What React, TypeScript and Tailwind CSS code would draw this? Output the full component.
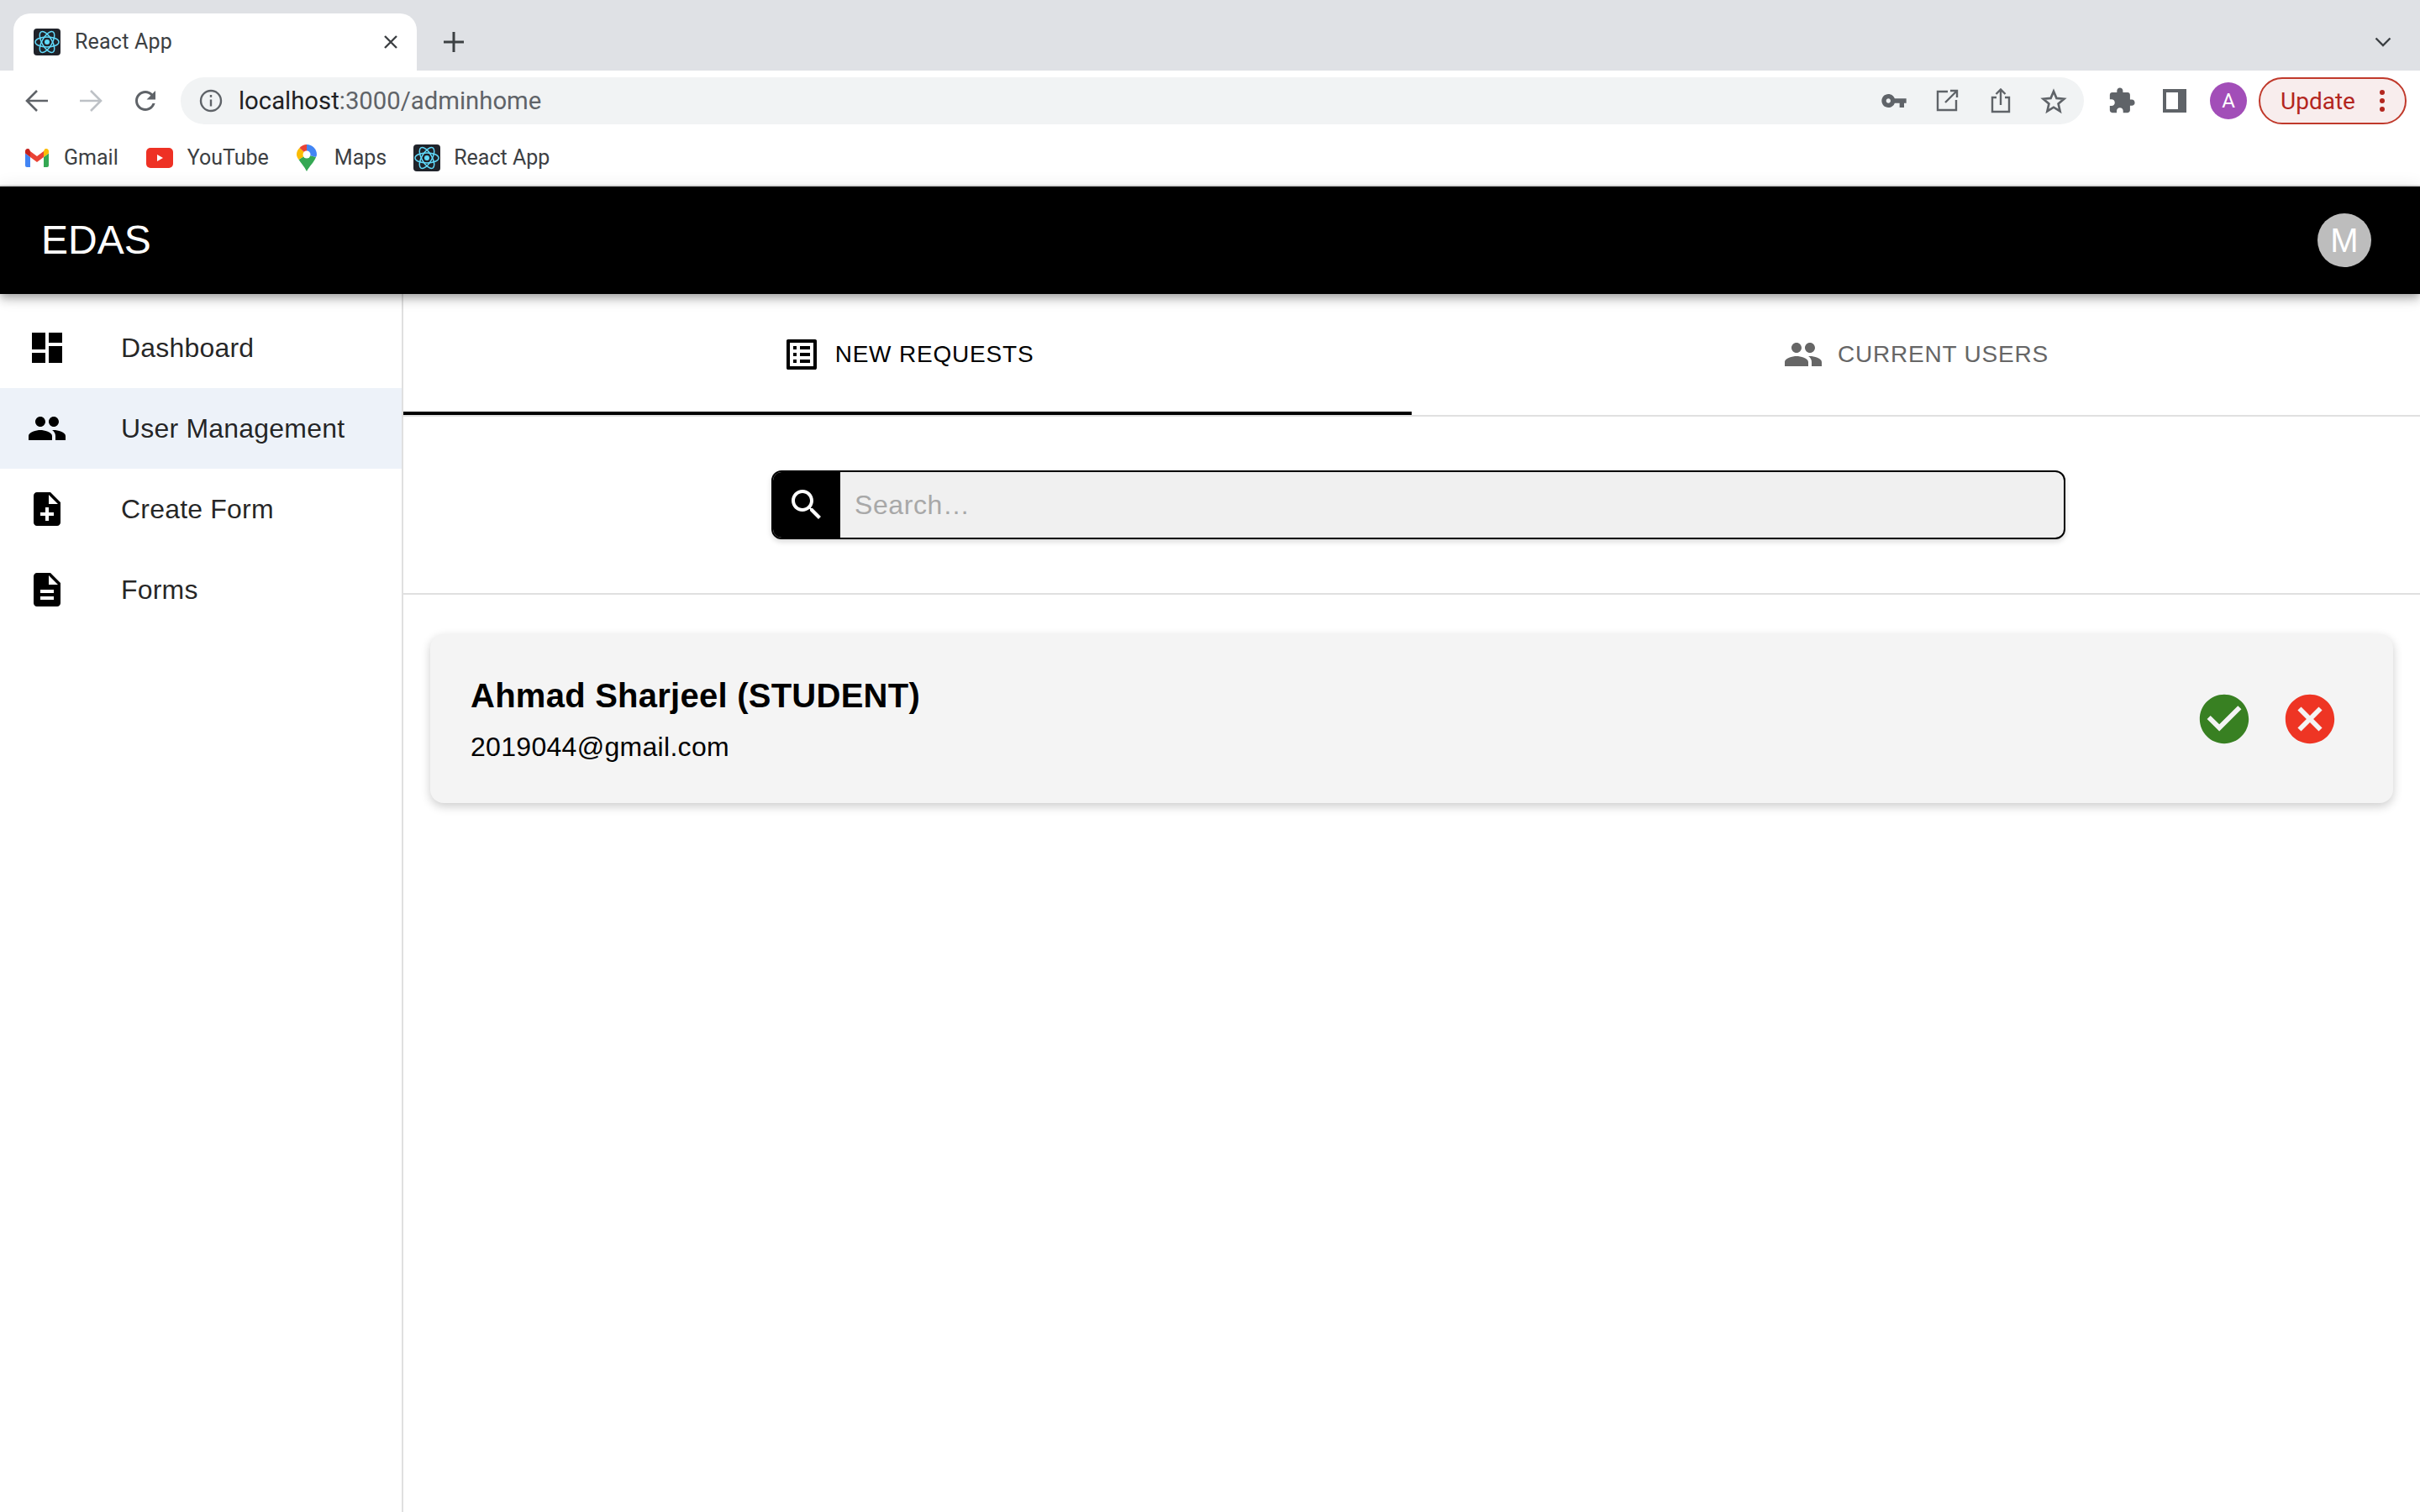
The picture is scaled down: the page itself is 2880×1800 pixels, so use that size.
import React from 'react';

const chromeFont = "font-['Roboto',sans-serif]";

const MuiIcon = ({ d, className }: { d: string; className?: string }) => (
    <svg viewBox="0 0 24 24" fill="currentColor" className={className}>
        <path d={d} />
    </svg>
);

const PATHS = {
    dashboard: 'M3 13h8V3H3v10zm0 8h8v-6H3v6zm10 0h8V11h-8v10zm0-18v6h8V3h-8z',
    people: 'M16 11c1.66 0 2.99-1.34 2.99-3S17.66 5 16 5c-1.66 0-3 1.34-3 3s1.34 3 3 3zm-8 0c1.66 0 2.99-1.34 2.99-3S9.66 5 8 5C6.34 5 5 6.34 5 8s1.34 3 3 3zm0 2c-2.33 0-7 1.17-7 3.5V19h14v-2.5c0-2.33-4.67-3.5-7-3.5zm8 0c-.29 0-.62.02-.97.05 1.16.84 1.97 1.97 1.97 3.45V19h6v-2.5c0-2.33-4.67-3.5-7-3.5z',
    noteAdd: 'M14 2H6c-1.1 0-1.99.9-1.99 2L4 20c0 1.1.89 2 1.99 2H18c1.1 0 2-.9 2-2V8l-6-6zm2 14h-3v3h-2v-3H8v-2h3v-3h2v3h3v2zm-3-7V3.5L18.5 9H13z',
    description: 'M14 2H6c-1.1 0-1.99.9-1.99 2L4 20c0 1.1.89 2 1.99 2H18c1.1 0 2-.9 2-2V8l-6-6zm2 16H8v-2h8v2zm0-4H8v-2h8v2zm-3-5V3.5L18.5 9H13z',
    listAlt: 'M19 5v14H5V5h14m1.1-2H3.9c-.5 0-.9.4-.9.9v16.2c0 .4.4.9.9.9h16.2c.4 0 .9-.5.9-.9V3.9c0-.5-.5-.9-.9-.9zM11 7h6v2h-6V7zm0 4h6v2h-6v-2zm0 4h6v2h-6zM7 7h2v2H7zm0 4h2v2H7zm0 4h2v2H7z',
    search: 'M15.5 14h-.79l-.28-.27C15.41 12.59 16 11.11 16 9.5 16 5.91 13.09 3 9.5 3S3 5.91 3 9.5 5.91 16 9.5 16c1.61 0 3.09-.59 4.23-1.57l.27.28v.79l5 4.99L20.49 19l-4.99-5zm-6 0C7.01 14 5 11.99 5 9.5S7.01 5 9.5 5 14 7.01 14 9.5 11.99 14 9.5 14z',
    check: 'M12 2C6.48 2 2 6.48 2 12s4.48 10 10 10 10-4.48 10-10S17.52 2 12 2zm-2 15l-5-5 1.41-1.41L10 14.17l7.59-7.59L19 8l-9 9z',
    cancel: 'M12 2C6.47 2 2 6.47 2 12s4.47 10 10 10 10-4.47 10-10S17.53 2 12 2zm5 13.59L15.59 17 12 13.41 8.41 17 7 15.59 10.59 12 7 8.41 8.41 7 12 10.59 15.59 7 17 8.41 13.41 12 17 15.59z',
    key: 'M12.65 10C11.83 7.67 9.61 6 7 6c-3.31 0-6 2.69-6 6s2.69 6 6 6c2.61 0 4.83-1.67 5.65-4H17v4h4v-4h2v-4H12.65zM7 14c-1.1 0-2-.9-2-2s.9-2 2-2 2 .9 2 2-.9 2-2 2z',
    puzzle: 'M20.5 11H19V7c0-1.1-.9-2-2-2h-4V3.5C13 2.12 11.88 1 10.5 1S8 2.12 8 3.5V5H4c-1.1 0-1.99.9-1.99 2v3.8H3.5c1.49 0 2.7 1.21 2.7 2.7s-1.21 2.7-2.7 2.7H2V20c0 1.1.9 2 2 2h3.8v-1.5c0-1.49 1.21-2.7 2.7-2.7 1.49 0 2.7 1.21 2.7 2.7V22H17c1.1 0 2-.9 2-2v-4h1.5c1.38 0 2.5-1.12 2.5-2.5S21.88 11 20.5 11z',
    refresh: 'M17.65 6.35C16.2 4.9 14.21 4 12 4c-4.42 0-7.99 3.58-7.99 8s3.57 8 7.99 8c3.73 0 6.84-2.55 7.73-6h-2.08c-.82 2.33-3.04 4-5.65 4-3.31 0-6-2.69-6-6s2.69-6 6-6c1.66 0 3.14.69 4.22 1.78L13 11h7V4l-2.35 2.35z',
};

const ReactFavicon = () => (
    <svg viewBox="0 0 32 48" className="w-8 h-12 shrink-0">
        <rect x="0" y="0" width="32" height="48" rx="4" fill="#20232a" />
        <g fill="none" stroke="#61dafb" strokeWidth="1.5">
            <ellipse cx="16" cy="24" rx="14" ry="6" />
            <ellipse cx="16" cy="24" rx="14" ry="6" transform="rotate(60 16 24)" />
            <ellipse cx="16" cy="24" rx="14" ry="6" transform="rotate(120 16 24)" />
        </g>
        <circle cx="16" cy="24" r="3" fill="#61dafb" />
    </svg>
);

const GmailIcon = () => (
    <svg viewBox="0 0 28 22" className="w-7 h-[22px] shrink-0">
        <path d="M2 22h4V10L0 5.5V20a2 2 0 0 0 2 2z" fill="#4285f4" />
        <path d="M22 22h4a2 2 0 0 0 2-2V5.5L22 10z" fill="#34a853" />
        <path d="M22 3v7l6-4.5V3c0-2.5-2.8-3.9-4.8-2.4z" fill="#fbbc04" />
        <path d="M6 10V3l8 6 8-6v7l-8 6z" fill="#ea4335" />
        <path d="M0 3v2.5L6 10V3L4.8.6C2.8-.9 0 .5 0 3z" fill="#c5221f" />
    </svg>
);

const YoutubeIcon = () => (
    <svg viewBox="0 0 32 24" className="w-8 h-6 shrink-0">
        <rect width="32" height="24" rx="5" fill="#ee3124" />
        <path d="M13 8l7 4-7 4z" fill="#fff" />
    </svg>
);

const MapsIcon = () => (
    <svg viewBox="0 0 24 32" className="w-6 h-8 shrink-0">
        <path d="M12 32C9 26 5 22 2.5 18L12 12z" fill="#34a853" />
        <path d="M12 32c3-6 9-11 11-17L12 12z" fill="#34a853" />
        <path d="M2.5 18C1 16 0 14 0 12c0-3 1-5.500 3.500-8L12 12z" fill="#fbbc04" />
        <path d="M3.500 4C6 1.500 9 0 12 0v12z" fill="#ea4335" />
        <path d="M12 0c6.500 0 12 5 12 12 0 1-.4 2-1 3L12 12z" fill="#4285f4" />
        <circle cx="12" cy="12" r="4.500" fill="#fff" />
    </svg>
);

const Bookmark = ({ icon, label, className }: { icon: React.ReactNode; label: string; className: string }) => (
    <div className={`flex items-center ${className}`}>
        {icon}
        <span>{label}</span>
    </div>
);

const BrowserChrome = () => (
    <div className={`${chromeFont} h-[222px] shrink-0 flex flex-col bg-white border-b-2 border-[#e3e3e3]`}>
        {/* tab strip */}
        <div className="h-[84px] bg-[#dfe1e5] flex items-end pl-[16px] pr-[34px]">
            <div className="w-[480px] h-[68px] bg-white rounded-t-[20px] flex items-center pl-[24px] pr-[22px]">
                <div className="h-8 w-8 shrink-0 flex items-center overflow-hidden rounded">
                    <ReactFavicon />
                </div>
                <span className="ml-[17px] text-[25px] text-[#3c4043] tracking-[0.2px]">React App</span>
                <svg viewBox="0 0 18 18" className="ml-auto w-[18px] h-[18px] text-[#3c4043]" stroke="currentColor" strokeWidth="2.4" fill="none">
                    <path d="M2 2l14 14M16 2L2 16" />
                </svg>
            </div>
            <svg viewBox="0 0 24 24" className="ml-[32px] mb-[22px] w-6 h-6 text-[#3c4043]" stroke="currentColor" strokeWidth="3" fill="none">
                <path d="M12 0v24M0 12h24" />
            </svg>
            <svg viewBox="0 0 20 12" className="ml-auto mb-[28px] w-5 h-3 text-[#3c4043]" stroke="currentColor" strokeWidth="2.400" fill="none">
                <path d="M1.500 1.500L10 10l8.500-8.500" />
            </svg>
        </div>
        {/* toolbar */}
        <div className="h-[72px] flex items-center pl-[30px]">
            <svg viewBox="0 0 28 28" className="w-7 h-7 text-[#5f6368]" stroke="currentColor" strokeWidth="2.600" fill="none">
                <path d="M27 14H3M14 2L2 14l12 12" />
            </svg>
            <svg viewBox="0 0 28 28" className="ml-[36px] w-7 h-7 text-[#bdc1c6]" stroke="currentColor" strokeWidth="2.600" fill="none">
                <path d="M1 14h24M14 2l12 12-12 12" />
            </svg>
            <MuiIcon d={PATHS.refresh} className="ml-[33px] w-9 h-9 text-[#5f6368]" />
            <div className="ml-[24px] w-[2265px] h-14 bg-[#f1f3f4] rounded-full flex items-center pl-[22px] pr-[20px]">
                <svg viewBox="0 0 28 28" className="w-7 h-7 text-[#5f6368]" fill="none" stroke="currentColor" strokeWidth="2.400">
                    <circle cx="14" cy="14" r="12" />
                    <path d="M14 12.500v8M14 7v2.800" />
                </svg>
                <span className="ml-[19px] pt-[2px] text-[29.3px] text-[#202124]">
                    localhost<span className="text-[#5f6368]">:3000/adminhome</span>
                </span>
                <MuiIcon d={PATHS.key} className="ml-auto w-[32px] h-[32px] text-[#5f6368]" />
                <svg viewBox="0 0 28 28" className="ml-[33px] w-7 h-7 text-[#5f6368]" fill="none" stroke="currentColor" strokeWidth="2.400">
                    <path d="M15 3H3v22h22V13M12 16L25 3M18 2h8v8" />
                </svg>
                <svg viewBox="0 0 24 30" className="ml-[38px] w-6 h-[30px] text-[#5f6368]" fill="none" stroke="currentColor" strokeWidth="2.400">
                    <path d="M7 11H2v17h20V11h-5M12 20V2M6.500 7L12 1.500 17.500 7" />
                </svg>
                <svg viewBox="0 0 24 24" className="ml-[35px] w-8 h-8 text-[#5f6368]" fill="none" stroke="currentColor" strokeWidth="2">
                    <path d="M12 3.500l2.600 6.200 6.700.6-5.100 4.400 1.500 6.600L12 17.800l-5.700 3.500 1.500-6.600-5.100-4.400 6.700-.6z" />
                </svg>
            </div>
            <MuiIcon d={PATHS.puzzle} className="ml-[28px] w-[34px] h-[34px] text-[#5f6368]" />
            <svg viewBox="0 0 28 28" className="ml-[32px] w-7 h-7 text-[#5f6368]" fill="currentColor">
                <path d="M0 0h28v28H0zM4 4v20h14V4z" fillRule="evenodd" />
            </svg>
            <div className="ml-[28px] w-11 h-11 rounded-full bg-[#a24eb8] flex items-center justify-center text-white text-[24px]">A</div>
            <div className="ml-[14px] w-[176px] h-[56px] rounded-full border-2 border-[#c0392b] bg-[#f8eded] flex items-center pl-[24px] pr-[24px] text-[#b3261e] text-[28px]">
                <span className="pt-[1px]">Update</span>
                <svg viewBox="0 0 6 26" className="ml-auto w-[6px] h-[26px]" fill="#b3261e">
                    <circle cx="3" cy="3" r="3" />
                    <circle cx="3" cy="13" r="3" />
                    <circle cx="3" cy="23" r="3" />
                </svg>
            </div>
        </div>
        {/* bookmarks */}
        <div className="flex-1 flex items-center pl-[30px] text-[25px] text-[#3c4043]">
            <Bookmark icon={<GmailIcon />} label="Gmail" className="gap-[18px]" />
            <Bookmark icon={<YoutubeIcon />} label="YouTube" className="ml-[33px] gap-[17px]" />
            <Bookmark icon={<MapsIcon />} label="Maps" className="ml-[33px] gap-[21px]" />
            <Bookmark
                icon={<div className="h-8 w-8 flex items-center overflow-hidden rounded"><ReactFavicon /></div>}
                label="React App"
                className="ml-[32px] gap-4"
            />
        </div>
    </div>
);

const NAV_ITEMS = [
    { label: 'Dashboard', icon: PATHS.dashboard },
    { label: 'User Management', icon: PATHS.people, active: true },
    { label: 'Create Form', icon: PATHS.noteAdd },
    { label: 'Forms', icon: PATHS.description },
];

export default function App() {
    return (
        <div className="w-[2880px] h-[1800px] overflow-hidden flex flex-col bg-white font-['Liberation_Sans',sans-serif]">
            <BrowserChrome />

            <header className="relative z-10 h-[128px] shrink-0 bg-black flex items-center justify-between pl-[49px] pr-[58px] shadow-[0_4px_8px_-2px_rgba(0,0,0,0.2),0_8px_10px_0_rgba(0,0,0,0.14),0_2px_20px_0_rgba(0,0,0,0.12)]">
                <span className="text-white text-[48px] leading-none">EDAS</span>
                <div className="w-16 h-16 rounded-full bg-[#bdbdbd] flex items-center justify-center text-white text-[40px]">M</div>
            </header>

            <div className="flex-1 flex min-h-0">
                <aside className="w-[480px] shrink-0 border-r-2 border-[#e0e0e0] pt-4">
                    {NAV_ITEMS.map(item => (
                        <div
                            key={item.label}
                            className={`h-24 flex items-center pl-8 ${item.active ? 'bg-[#edf2f9]' : ''}`}
                        >
                            <MuiIcon d={item.icon} className="w-12 h-12 text-black shrink-0" />
                            <span className="ml-[64px] text-[32px] tracking-[0.2px] text-black/87">{item.label}</span>
                        </div>
                    ))}
                </aside>

                <main className="flex-1 min-w-0 flex flex-col">
                    <div className="h-[146px] shrink-0 flex border-b-2 border-[#e0e0e0]">
                        <div className="flex-1 flex items-center justify-center gap-4 border-b-4 border-black text-black pt-[4px]">
                            <MuiIcon d={PATHS.listAlt} className="w-12 h-12" />
                            <span className="text-[28px] tracking-[0.8px]">NEW REQUESTS</span>
                        </div>
                        <div className="flex-1 flex items-center justify-center gap-[17px] text-[#666666]">
                            <MuiIcon d={PATHS.people} className="w-12 h-12" />
                            <span className="text-[28px] tracking-[0.8px]">CURRENT USERS</span>
                        </div>
                    </div>

                    <div className="h-[212px] shrink-0 flex items-center justify-center border-b-2 border-[#e0e0e0]">
                        <div className="w-[1540px] h-[82px] ml-[16px] flex rounded-[12px] border-2 border-black overflow-hidden bg-[#f0f0f0] shadow-[0_3px_6px_rgba(0,0,0,0.15)]">
                            <div className="w-[80px] shrink-0 bg-black flex items-center justify-center text-white">
                                <MuiIcon d={PATHS.search} className="w-12 h-12" />
                            </div>
                            <input
                                placeholder="Search…"
                                className="flex-1 bg-transparent pl-[17px] text-[32px] tracking-[0.6px] outline-none placeholder:text-[#a8a8a8]"
                            />
                        </div>
                    </div>

                    <div className="pt-[47px] px-8">
                        <div className="h-[201px] rounded-[16px] bg-[#f4f4f4] flex items-center justify-between pl-12 pr-16 shadow-[0_4px_12px_rgba(0,0,0,0.2)]">
                            <div className="flex flex-col pt-[4px]">
                                <span className="text-[40px] leading-[50px] font-bold tracking-[0.25px] text-black">Ahmad Sharjeel (STUDENT)</span>
                                <span className="mt-3 text-[32px] leading-[48px] tracking-[0.3px] text-black">2019044@gmail.com</span>
                            </div>
                            <div className="flex items-center gap-8">
                                <MuiIcon d={PATHS.check} className="w-[70px] h-[70px] text-[#388022]" />
                                <MuiIcon d={PATHS.cancel} className="w-[70px] h-[70px] text-[#ee3524]" />
                            </div>
                        </div>
                    </div>
                </main>
            </div>
        </div>
    );
}
